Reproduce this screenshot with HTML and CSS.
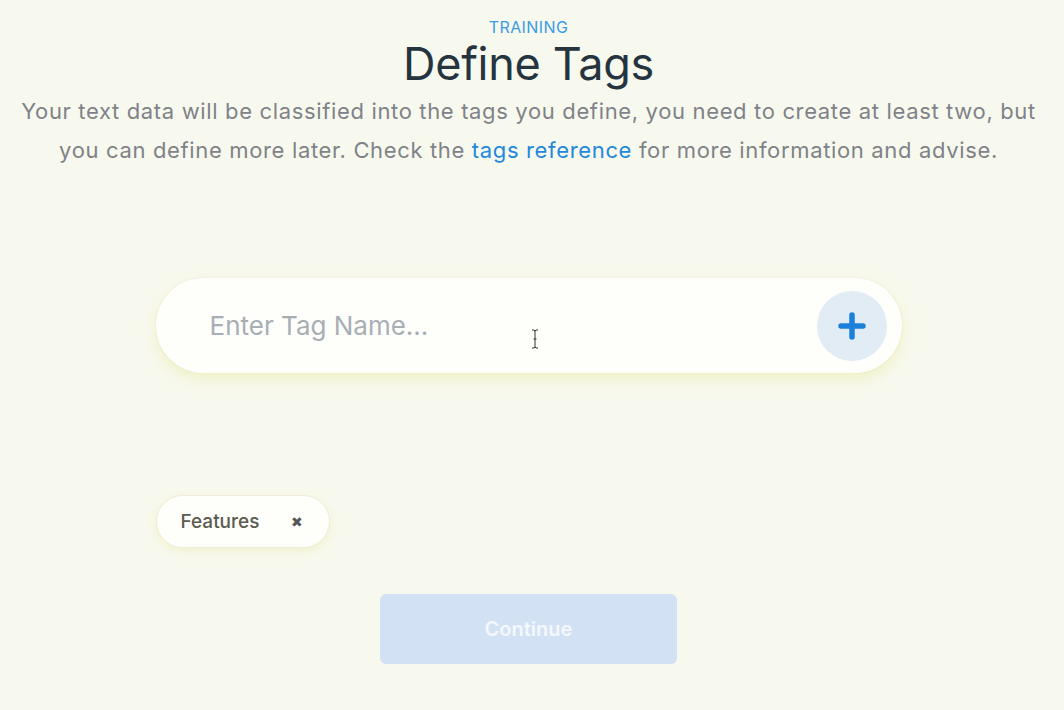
FILE: index.html
```html
<!DOCTYPE html>
<html lang="en">
<head>
<meta charset="utf-8">
<title>Define Tags</title>
<link rel="stylesheet" href="styles.css">
</head>
<body>
<main class="page">
  <header class="intro">
    <div class="eyebrow">TRAINING</div>
    <h1 class="title">Define Tags</h1>
    <p class="lead">Your text data will be classified into the tags you define, you need to create at least two, but you can define more later. Check the <a class="link" href="#">tags reference</a> for more information and advise.</p>
  </header>

  <section class="entry">
    <div class="field">
      <input class="field-input" type="text" placeholder="Enter Tag Name...">
      <button class="add-btn" type="button" aria-label="Add tag">
        <svg width="30" height="30" viewBox="0 0 30 30"><path d="M15 4v22M4 15h22" stroke="#1a80dc" stroke-width="5.5" stroke-linecap="round" fill="none"/></svg>
      </button>
      <svg class="cursor" width="10" height="20" viewBox="0 0 10 20"><path d="M2 1h2l1 1 1-1h2M5 2v16M2 19h2l1-1 1 1h2M3.5 10h3" stroke="#333" stroke-width="1" fill="none"/></svg>
    </div>
  </section>

  <section class="tags">
    <span class="chip">Features <span class="chip-x">&#x2716;</span></span>
  </section>

  <div class="actions">
    <button class="continue" type="button" disabled>Continue</button>
  </div>
</main>
</body>
</html>
```
FILE: styles.css
```css
html, body {
  margin: 0;
  padding: 0;
  background: #f8f9ee;
  font-family: "Inter", "Noto Sans", sans-serif;
}
.page {
  width: 1057px;
  height: 710px;
  display: flex;
  flex-direction: column;
  align-items: center;
}
.intro {
  text-align: center;
  padding-top: 18px;
  display: flex;
  flex-direction: column;
  align-items: center;
}
.eyebrow {
  color: #3d9be3;
  font-size: 16px;
  line-height: 18px;
  letter-spacing: 0.4px;
}
.title {
  margin: 0;
  font-weight: 400;
  font-size: 45px;
  line-height: 55px;
  color: #25343f;
  letter-spacing: -0.3px;
}
.lead {
  margin: 0;
  margin-top: 1px;
  font-size: 22px;
  line-height: 39px;
  letter-spacing: 0.65px;
  color: #7f8289;
  width: 1044px;
}
.link {
  color: #2288dd;
  text-decoration: none;
}
.entry {
  margin-top: 108px;
}
.field {
  position: relative;
  width: 746px;
  height: 95px;
  box-sizing: border-box;
  border-radius: 48px;
  background: #fefefb;
  box-shadow: 0 6px 14px rgba(230, 230, 150, 0.45), 0 0 2px rgba(220,220,200,0.6);
  display: flex;
  align-items: center;
  padding: 0 15px 0 54px;
}
.field-input {
  flex: 1;
  border: none;
  outline: none;
  background: transparent;
  font-family: inherit;
  font-size: 26px;
  color: #333;
  padding: 0;
}
.field-input::placeholder {
  color: #a7afb5;
}
.add-btn {
  width: 70px;
  height: 70px;
  border-radius: 50%;
  border: none;
  background: #e2ecf4;
  display: flex;
  align-items: center;
  justify-content: center;
  padding: 0;
}
.cursor {
  position: absolute;
  left: 374px;
  top: 51px;
}
.tags {
  width: 746px;
  margin-top: 122px;
  display: flex;
}
.chip {
  display: inline-flex;
  align-items: center;
  height: 53px;
  box-sizing: border-box;
  padding: 0 26px 0 24px;
  border-radius: 27px;
  background: #fefefb;
  border: 1px solid #eeeed8;
  box-shadow: 0 3px 8px rgba(230, 230, 150, 0.4);
  font-size: 19px;
  font-weight: 500;
  color: #5b5b50;
}
.chip-x {
  margin-left: 32px;
  font-size: 14px;
  color: #555;
}
.actions {
  margin-top: 46px;
}
.continue {
  width: 297px;
  height: 70px;
  border: none;
  border-radius: 6px;
  background: #d3e1f5;
  color: #f4f8fd;
  font-family: inherit;
  font-size: 20px;
  font-weight: 600;
}
```
